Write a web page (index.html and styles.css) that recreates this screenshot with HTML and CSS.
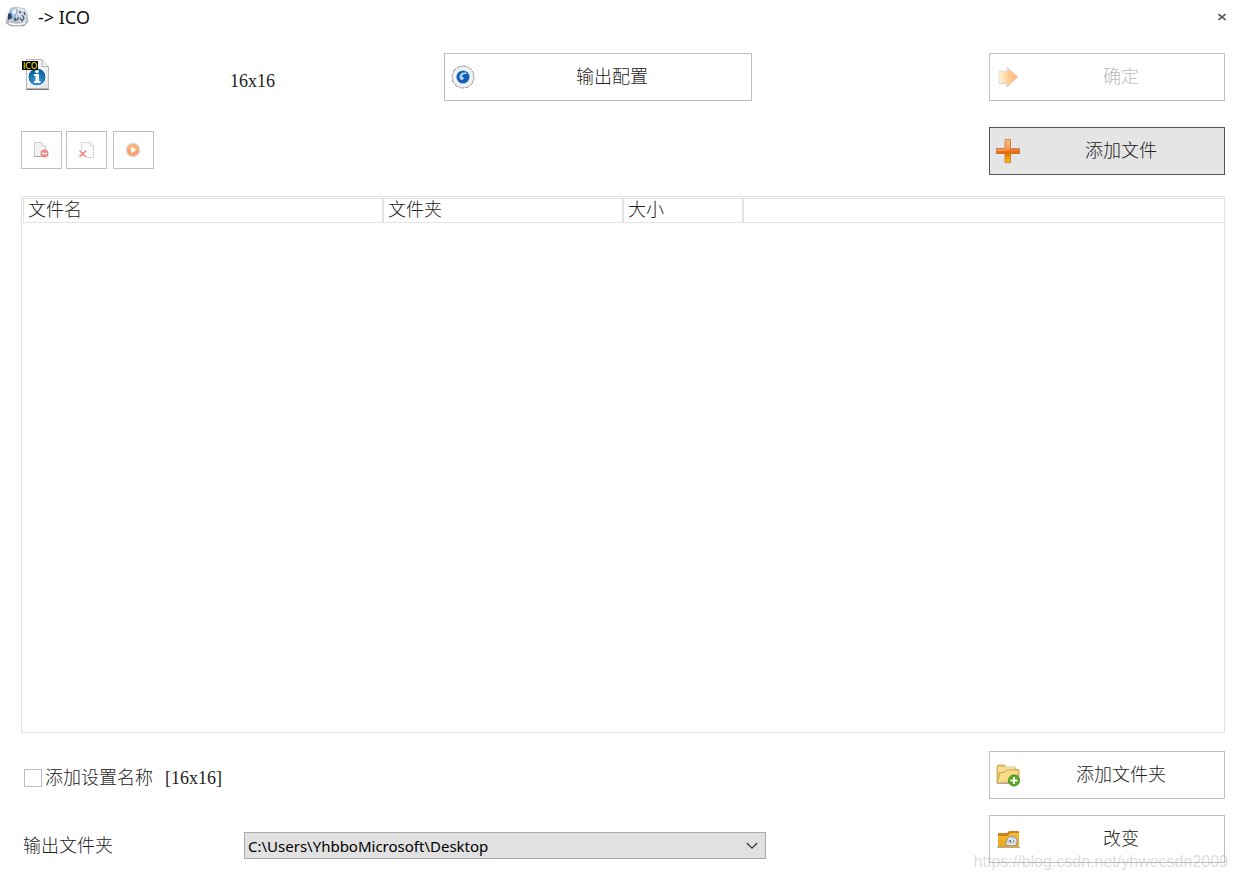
FILE: index.html
```html
<!DOCTYPE html>
<html lang="zh-CN">
<head>
<meta charset="utf-8">
<title>-&gt; ICO</title>
<link rel="stylesheet" href="styles.css">
</head>
<body>
<div class="window">
  <header class="titlebar">
    <svg class="app-icon" width="24" height="22" viewBox="0 0 24 22" aria-hidden="true">
      <defs><linearGradient id="metal" x1="0" y1="0" x2="0" y2="1"><stop offset="0" stop-color="#f1f3f6"/><stop offset="1" stop-color="#a9adb4"/></linearGradient></defs>
      <path d="M6 2 11 1 20 3 22 8 23 16 19 20 6 20 1 17 2 12Z" fill="url(#metal)" stroke="#a5a8ae" stroke-width=".7"/>
      <path d="M4 5 8 2 13 3 12 8 9 13 3 13Z" fill="#9db9d8"/>
      <path d="M7 4 11 3 11 7 8 9Z" fill="#e9f2fb"/>
      <path d="M3 8 6 7 7 12 3 14ZM10 11 12 14 9 15Z" fill="#24456e"/>
      <path d="M14 6 18 5 21 10 21 16 14 16Z" fill="#d5dbe3"/>
      <path d="M14 5 16 7M19 6 20 9M17 9 19 12 17 15 15 12M12 14 14 11" stroke="#36506f" stroke-width="1.2" fill="none"/>
      <path d="M4 17Q12 20 20 17" stroke="#fafafa" stroke-width="1.4" fill="none"/>
    </svg>
    <h1 class="title">-&gt; ICO</h1>
    <button class="close" type="button" aria-label="关闭"><svg width="8" height="8" viewBox="0 0 8 8"><path d="M.5 1 7.5 7M7.5 1 .5 7" stroke="#555" stroke-width="1.6"/></svg></button>
  </header>

  <main class="content">
    <section class="top">
      <svg class="format-icon" width="28" height="34" viewBox="0 0 28 34" aria-hidden="true">
        <defs>
          <linearGradient id="page" x1="0" y1="0" x2="1" y2="1"><stop offset="0" stop-color="#fff"/><stop offset="1" stop-color="#e4e4e4"/></linearGradient>
          <radialGradient id="blue" cx=".5" cy=".75" r=".7"><stop offset="0" stop-color="#35a2dc"/><stop offset="1" stop-color="#0b5792"/></radialGradient>
        </defs>
        <path d="M4.500 2.500H20L26.500 9.500V31.500H4.500Z" fill="url(#page)" stroke="#b5b5b5"/>
        <path d="M20 2.500V9.500H26.500" fill="#eee" stroke="#b0b0b0"/>
        <path d="M4 32.500H27" stroke="#777"/>
        <circle cx="15" cy="20" r="9" fill="url(#blue)" stroke="#fff"/>
        <path d="M12 17H17V24H18.500V26H12V24H13.500V19H12Z" fill="#fff"/><circle cx="15" cy="14.500" r="1.800" fill="#fff"/>
        <rect y="4" width="16" height="9" fill="#000"/>
        <text class="format-tag" x="1" y="12">ICO</text>
      </svg>
      <span class="size">16x16</span>
      <button class="btn" type="button">
        <svg class="btn-icon" width="24" height="24" viewBox="0 0 24 24" aria-hidden="true">
          <circle cx="12" cy="12" r="10.400" fill="#eee" stroke="#777" stroke-width="2" stroke-linecap="round" stroke-dasharray="2.720 2.720"/>
          <circle cx="12" cy="12" r="9.700" fill="none" stroke="#eee" stroke-width="2.200" stroke-linecap="round" stroke-dasharray="2.540 2.540"/>
          <circle cx="12" cy="12" r="9.300" fill="#f3f3f3"/>
          <circle cx="12" cy="12" r="7" fill="#b9c9dc"/>
          <circle cx="12" cy="12" r="6.300" fill="#145fb5"/>
          <path d="M15.500 8C12 6.500 8.500 8.500 8.500 12 8.500 15 11.500 16 12.500 14 13.200 12.500 12 11.500 11.200 12.200 10.500 10 12.500 8.700 15.500 9Z" fill="#b9d8f5"/>
        </svg>
        <span class="btn-label">输出配置</span>
      </button>
      <button class="btn top-last" type="button" disabled>
        <svg class="btn-icon" width="24" height="24" viewBox="0 0 24 24" aria-hidden="true">
          <defs><linearGradient id="arrow"><stop offset="0" stop-color="#fff2d8"/><stop offset=".55" stop-color="#ffc98c"/><stop offset="1" stop-color="#ffac76"/></linearGradient></defs>
          <path d="M3 6H11V2L22 12 11 22V18H3Z" fill="url(#arrow)" stroke="#dfdfe8"/>
          <path d="M3 18.500H11V22L15 18.500" fill="none" stroke="#e2cfc4"/>
        </svg>
        <span class="btn-label">确定</span>
      </button>
      <div class="toolbar">
        <button class="tool" type="button" disabled aria-label="移除">
          <svg width="16" height="16" viewBox="0 0 16 16"><path d="M1.500.5H9L12.500 4V14.500H1.500Z" fill="#f3f3f3" stroke="#c9c9c9"/><path d="M9 .5V4H12.500" fill="#fff" stroke="#c9c9c9"/><path d="M1 14.500H9" stroke="#aaa"/><circle cx="11.500" cy="11.500" r="4" fill="#ee8985"/><path d="M9 11.500H14" stroke="#fff" stroke-width="1.500"/></svg>
        </button>
        <button class="tool tool-gap" type="button" disabled aria-label="清空列表">
          <svg width="16" height="16" viewBox="0 0 16 16"><path d="M3.500 8V.5H12L15.500 4V15.500H8" fill="#fff" stroke="#d4d4d4"/><path d="M12 .5V4H15.500" fill="none" stroke="#d4d4d4"/><path d="M1.500 8.500 8 15M8 8.500 1.500 15" stroke="#ef8078" stroke-width="1.500"/></svg>
        </button>
        <button class="tool" type="button" disabled aria-label="播放">
          <svg width="16" height="16" viewBox="0 0 16 16"><circle cx="8" cy="8" r="7.500" fill="#dedede"/><circle cx="8" cy="8" r="6" fill="#fa9f6c"/><path d="M2 8A6 6 0 0 1 14 8Z" fill="#fbb078"/><path d="M6 4.500 11.500 8 6 11.500Z" fill="#fff"/></svg>
        </button>
      </div>
      <button class="btn btn-active top-last" type="button">
        <svg class="btn-icon" width="24" height="24" viewBox="0 0 24 24" aria-hidden="true">
          <defs><linearGradient id="plus" x1="0" y1="0" x2="0" y2="1"><stop offset="0" stop-color="#ffb46b"/><stop offset=".48" stop-color="#f1772b"/><stop offset=".55" stop-color="#e96700"/><stop offset="1" stop-color="#ffc400"/></linearGradient></defs>
          <path d="M10 1H15V10H24V15H15V24H10V15H1V10H10Z" fill="#888" opacity=".6"/>
          <path d="M9 .5H14.500V9.500H23.500V14.500H14.500V23.500H9V14.500H.5V9.500H9Z" fill="url(#plus)" stroke="#b96a3a" stroke-width=".7"/>
          <path d="M1 11.500Q7 13 12 10.500 17 9 23 11V10H14V1H9.500V10H1Z" fill="#ffc08a" opacity=".45"/>
        </svg>
        <span class="btn-label">添加文件</span>
      </button>
    </section>

    <section class="list">
      <table class="files">
        <thead><tr><th class="col-name" scope="col">文件名</th><th class="col-folder" scope="col">文件夹</th><th class="col-size" scope="col">大小</th><th class="col-rest"></th></tr></thead>
      </table>
    </section>

    <section class="bottom">
      <div class="options">
        <label class="check"><input class="checkbox" type="checkbox"><span>添加设置名称</span><span class="suffix">[16x16]</span></label>
        <div class="output">
          <label class="output-label" for="folder">输出文件夹</label>
          <div class="select-wrap">
            <select class="select" id="folder"><option>C:\Users\YhbboMicrosoft\Desktop</option></select>
            <svg class="chevron" width="12" height="8" viewBox="0 0 12 8" aria-hidden="true"><path d="M.8 1 6 6.200 11.200 1" fill="none" stroke="#333" stroke-width="1.200"/></svg>
          </div>
        </div>
      </div>
      <div class="actions">
        <button class="btn" type="button">
          <svg class="btn-icon" width="24" height="24" viewBox="0 0 24 24" aria-hidden="true">
            <path d="M1 20V3L2 2H8L10 4H19V6L23 7V19H1Z" fill="#edc466" stroke="#b98f3d" stroke-width=".6"/>
            <path d="M2 4H18V9H2Z" fill="#f7dc92"/>
            <path d="M1 20 4 10 9 9 11 7H23L20 19Z" fill="#fbdc86" stroke="#c09a45" stroke-width=".7"/>
            <path d="M1 20.500H18" stroke="#aaa" stroke-width="1"/>
            <circle cx="18" cy="17.500" r="5.700" fill="#57a821" stroke="#477f2a" stroke-width=".6"/>
            <path d="M18 14V21M14.500 17.500H21.500" stroke="#fff" stroke-width="2"/>
          </svg>
          <span class="btn-label">添加文件夹</span>
        </button>
        <button class="btn" type="button">
          <svg class="btn-icon" width="24" height="24" viewBox="0 0 24 24" aria-hidden="true">
            <defs><linearGradient id="folder-fill" x1="0" y1="0" x2="0" y2="1"><stop offset="0" stop-color="#f6bc32"/><stop offset="1" stop-color="#e8a51d"/></linearGradient></defs>
            <path d="M2 20V6H11L13 4H22Q23 4 23 5V20Z" fill="#cc8420"/>
            <path d="M2 9H12L14 6H23V20H2Z" fill="url(#folder-fill)"/>
            <path d="M1 20.500H24" stroke="#aaa"/>
            <path d="M9.500 16.500Q11 9.500 16 9 20 9 21.500 14L20 18.500H11Z" fill="#c5cad1" stroke="#8f8b80" stroke-width=".7"/>
            <path d="M11 16.500Q15 19 20 16.500" fill="none" stroke="#f6f8fa"/>
            <circle cx="14" cy="12.500" r="2" fill="#e6eef8"/><circle cx="18" cy="13.500" r="1.800" fill="#f6f8fa"/><path d="M12.500 14 15 12.500V15ZM17 12.500 19 14 17.500 15Z" fill="#4a6380"/>
          </svg>
          <span class="btn-label">改变</span>
        </button>
        <span class="watermark">https://blog.csdn.net/yhwecsdn2009</span>
      </div>
    </section>
  </main>
</div>
</body>
</html>
```
FILE: styles.css
```css
* { box-sizing: border-box; }

body {
  margin: 0;
  background: #fff;
  color: #222;
  font: 300 18px/24px "Liberation Serif", "Noto Sans CJK SC", serif;
}

button, select, input { font: inherit; color: inherit; margin: 0; }

.window { min-height: 100vh; display: flex; flex-direction: column; }

.titlebar {
  display: flex;
  align-items: center;
  height: 33px;
  padding: 0 6px 0 5px;
}

.title {
  flex: 1;
  margin: 0 0 0 9px;
  color: #111;
  font: 400 18px/24px "Noto Sans", sans-serif;
}

.close {
  display: flex;
  padding: 5px;
  border: 0;
  background: none;
}

.content {
  flex: 1;
  display: flex;
  flex-direction: column;
  padding: 20px 12px 17px 21px;
}

.top {
  display: grid;
  grid-template-columns: 209fr 214fr 308fr 237fr 236fr;
  row-gap: 26px;
  align-items: center;
}

.format-icon { align-self: start; margin: 4px 0 0 1px; }
.format-tag { fill: #ff0; font: 400 8px "DejaVu Sans", sans-serif; }
.size { padding-top: 8px; }
.top-last { grid-column: 5; }

.btn {
  display: flex;
  align-items: center;
  width: 100%;
  height: 48px;
  padding: 0 2px 0 6px;
  border: 1px solid #bfbfbf;
  background: #fff;
}
.btn:disabled { color: #bbb; }
.btn-active { border-color: #555; background: #e5e5e5; }
.btn-icon { flex: none; }
.btn-label { flex: 1; text-align: center; }

.toolbar { grid-column: 1 / 5; display: flex; gap: 4px; padding-bottom: 2px; }
.tool {
  display: flex;
  align-items: center;
  justify-content: center;
  width: 41px;
  height: 38px;
  padding: 0 2px 0 0;
  border: 1px solid #bfbfbf;
  background: #fff;
}
.tool-gap { margin-right: 2px; }

.list {
  flex: 1;
  margin: 21px 0 18px;
  padding: 1px 0 0 1px;
  border: 1px solid #e3e3e3;
}

.files { width: 100%; table-layout: fixed; border-collapse: separate; border-spacing: 0; }
.files th {
  height: 25px;
  padding: 0 4px 1px;
  border: solid #e3e3e3;
  border-width: 1px 2px 1px 0;
  font-weight: 300;
  line-height: 22px;
  text-align: left;
}
.files .col-name { width: 361px; border-left-width: 1px; }
.files .col-folder { width: 240px; }
.files .col-size { width: 120px; }
.files .col-rest { border-right-width: 0; }

.bottom { display: grid; grid-template-columns: 968fr 236fr; }

.options { display: flex; flex-direction: column; gap: 42px; padding: 15px 0 0 2px; }
.check { display: flex; align-items: center; }
.checkbox {
  appearance: none;
  width: 18px;
  height: 18px;
  margin: 0 3px 0 1px;
  border: 1px solid #bfbfbf;
  background: #fff;
}
.suffix { margin-left: 12px; }

.output { display: grid; grid-template-columns: 221fr 522fr 223fr; align-items: center; }
.select-wrap { position: relative; }
.select {
  appearance: none;
  display: block;
  width: 100%;
  height: 27px;
  padding: 0 28px 0 3px;
  border: 1px solid #a9a9a9;
  border-radius: 0;
  background: #e1e1e1;
  color: #000;
  font: 400 15px/24px "Noto Sans", sans-serif;
}
.chevron { position: absolute; right: 8px; top: 10px; pointer-events: none; }

.actions { position: relative; display: flex; flex-direction: column; gap: 16px; }
.watermark {
  position: absolute;
  right: -3px;
  bottom: -11px;
  color: rgba(180, 180, 180, 0.45);
  font: 400 16px/24px "Liberation Sans", sans-serif;
  white-space: nowrap;
  pointer-events: none;
}
```
